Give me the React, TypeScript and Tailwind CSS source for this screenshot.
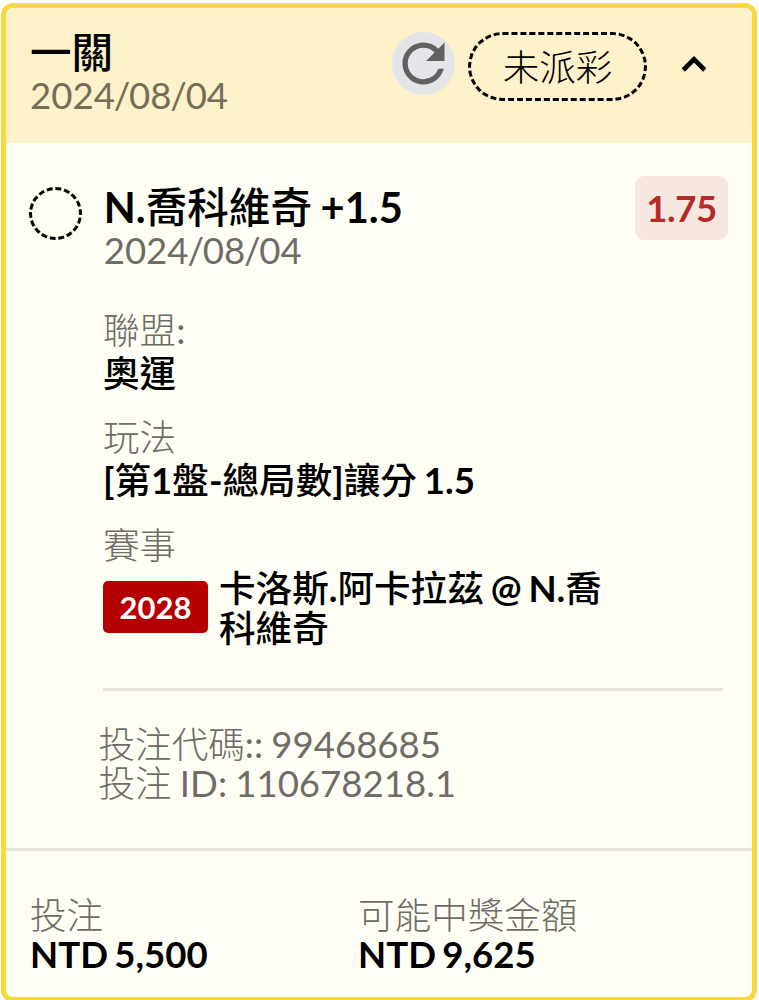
import React from 'react';
import { MdRefresh } from 'react-icons/md';

interface MixedProps {
  text: string;
  cjk: string;
}

// Latin glyphs take the weight of the parent, CJK glyphs get their own
const Mixed: React.FC<MixedProps> = ({ text, cjk }) => (
  <>
    {text.split(/([\u4e00-\u9fff]+)/).map((part, i) =>
      i % 2 === 1 ? (
        <span key={i} className={cjk}>
          {part}
        </span>
      ) : (
        part
      ),
    )}
  </>
);

// Pulls the slashes in a little so the date sets tighter
const DateText = ({ value }: { value: string }) => (
  <>
    {value.split(/(\/)/).map((part, i) => (
      <span key={i} className={part === '/' ? '-mx-[1.2px]' : undefined}>
        {part}
      </span>
    ))}
  </>
);

const details = [
  { label: '聯盟:', value: '奧運' },
  { label: '玩法', value: '[第1盤-總局數]讓分 1.5' },
];

const totals = [
  { label: '投注', value: 'NTD 5,500', width: 'w-[328px]' },
  { label: '可能中獎金額', value: 'NTD 9,625', width: 'w-[300px]' },
];

const Header = () => (
  <header className="flex h-[135px] shrink-0 items-start bg-[#fff2cb] pl-6">
    <div className="w-[362px] pt-[22px]">
      <h1 className="text-[41.6px] leading-[45px] font-bold">
        <Mixed text="一關" cjk="font-medium" />
      </h1>
      <p className="text-[36.6px] leading-[40px] text-[#746d57]">
        <DateText value="2024/08/04" />
      </p>
    </div>
    <button
      type="button"
      aria-label="Refresh"
      className="mt-6 flex size-[63px] items-center justify-center rounded-full bg-[#e3e5e8]"
    >
      <MdRefresh className="size-[63px] text-[#616161]" />
    </button>
    <span className="mt-6 ml-[13px] flex h-[69px] w-[179px] items-center justify-center rounded-full border-3 border-dashed border-black text-[36.6px] leading-[40px]">
      <Mixed text="未派彩" cjk="font-light" />
    </span>
    <svg viewBox="0 0 26 18" className="mt-[47px] ml-[34px] h-[18px] w-[26px]">
      <path d="M2.3 15 13 4.3 23.7 15" fill="none" stroke="#000" strokeWidth="4.6" />
    </svg>
  </header>
);

const Selection = () => (
  <div className="flex h-[165px] items-start pl-[23.4px]">
    <span className="mt-11 size-[53px] shrink-0 rounded-full border-3 border-dashed border-black" />
    <div className="ml-[21.3px] flex-1 pt-[41px]">
      <h2 className="text-[41.6px] leading-[46px] font-bold [word-spacing:-1.5px]">
        <Mixed text="N.喬科維奇 +1.5" cjk="font-medium" />
      </h2>
      <p className="text-[36.6px] leading-[41px] text-[#6e6c66]">
        <DateText value="2024/08/04" />
      </p>
    </div>
    <span className="mt-[33px] mr-6 flex h-16 w-[93px] items-center justify-center rounded-[9px] bg-[#f7e7e1] text-[36.6px] font-bold tracking-[-0.5px] text-[#b52a24]">
      1.75
    </span>
  </div>
);

export default function App() {
  return (
    <div className="h-[1000px] w-[759px] overflow-hidden bg-white pt-[3px] pl-px font-['Lato','Noto_Sans_CJK_TC',sans-serif] text-black">
      <main className="flex h-[999px] w-[756px] flex-col overflow-hidden rounded-[12px] border-5 border-[#f7d93d] bg-[#fffef5]">
        <Header />
        <Selection />

        <section className="ml-[97px] h-[383px] w-[620px] border-b-3 border-[#e8e4dd] pt-px text-[36.6px] [word-spacing:-2px]">
          {details.map(({ label, value }) => (
            <div key={label} className="mb-[22px]">
              <p className="leading-[43px] text-[#6e6c66]">
                <Mixed text={label} cjk="font-light" />
              </p>
              <p className="leading-[42px] font-bold">
                <Mixed text={value} cjk="font-medium" />
              </p>
            </div>
          ))}
          <p className="leading-[44px] text-[#6e6c66]">
            <Mixed text="賽事" cjk="font-light" />
          </p>
          <div className="mt-[2px] flex items-start">
            <span className="mt-[12px] flex h-[52px] w-[105px] items-center justify-center rounded-[5px] bg-[#b50000] text-[31px] leading-[36px] font-bold text-white">
              2028
            </span>
            <p className="ml-[11px] w-[400px] leading-[39.5px] font-bold">
              <Mixed text="卡洛斯.阿卡拉茲 @ N.喬科維奇" cjk="font-medium" />
            </p>
          </div>
        </section>

        <section className="h-[160px] border-b-3 border-[#e8e4dd] pt-[33.5px] pl-[92.5px] text-[36.6px] leading-[39.5px] text-[#6e6c66] [word-spacing:-1.2px]">
          <p>
            <Mixed text="投注代碼:: 99468685" cjk="font-light" />
          </p>
          <p>
            <Mixed text="投注 ID: 110678218.1" cjk="font-light" />
          </p>
        </section>

        <footer className="flex pt-[45px] pl-6 text-[36.6px] leading-[39px] [word-spacing:-2.5px]">
          {totals.map(({ label, value, width }) => (
            <div key={label} className={width}>
              <p className="text-[#6e6c66]">
                <Mixed text={label} cjk="font-light" />
              </p>
              <p className="font-bold">{value}</p>
            </div>
          ))}
        </footer>
      </main>
    </div>
  );
}
